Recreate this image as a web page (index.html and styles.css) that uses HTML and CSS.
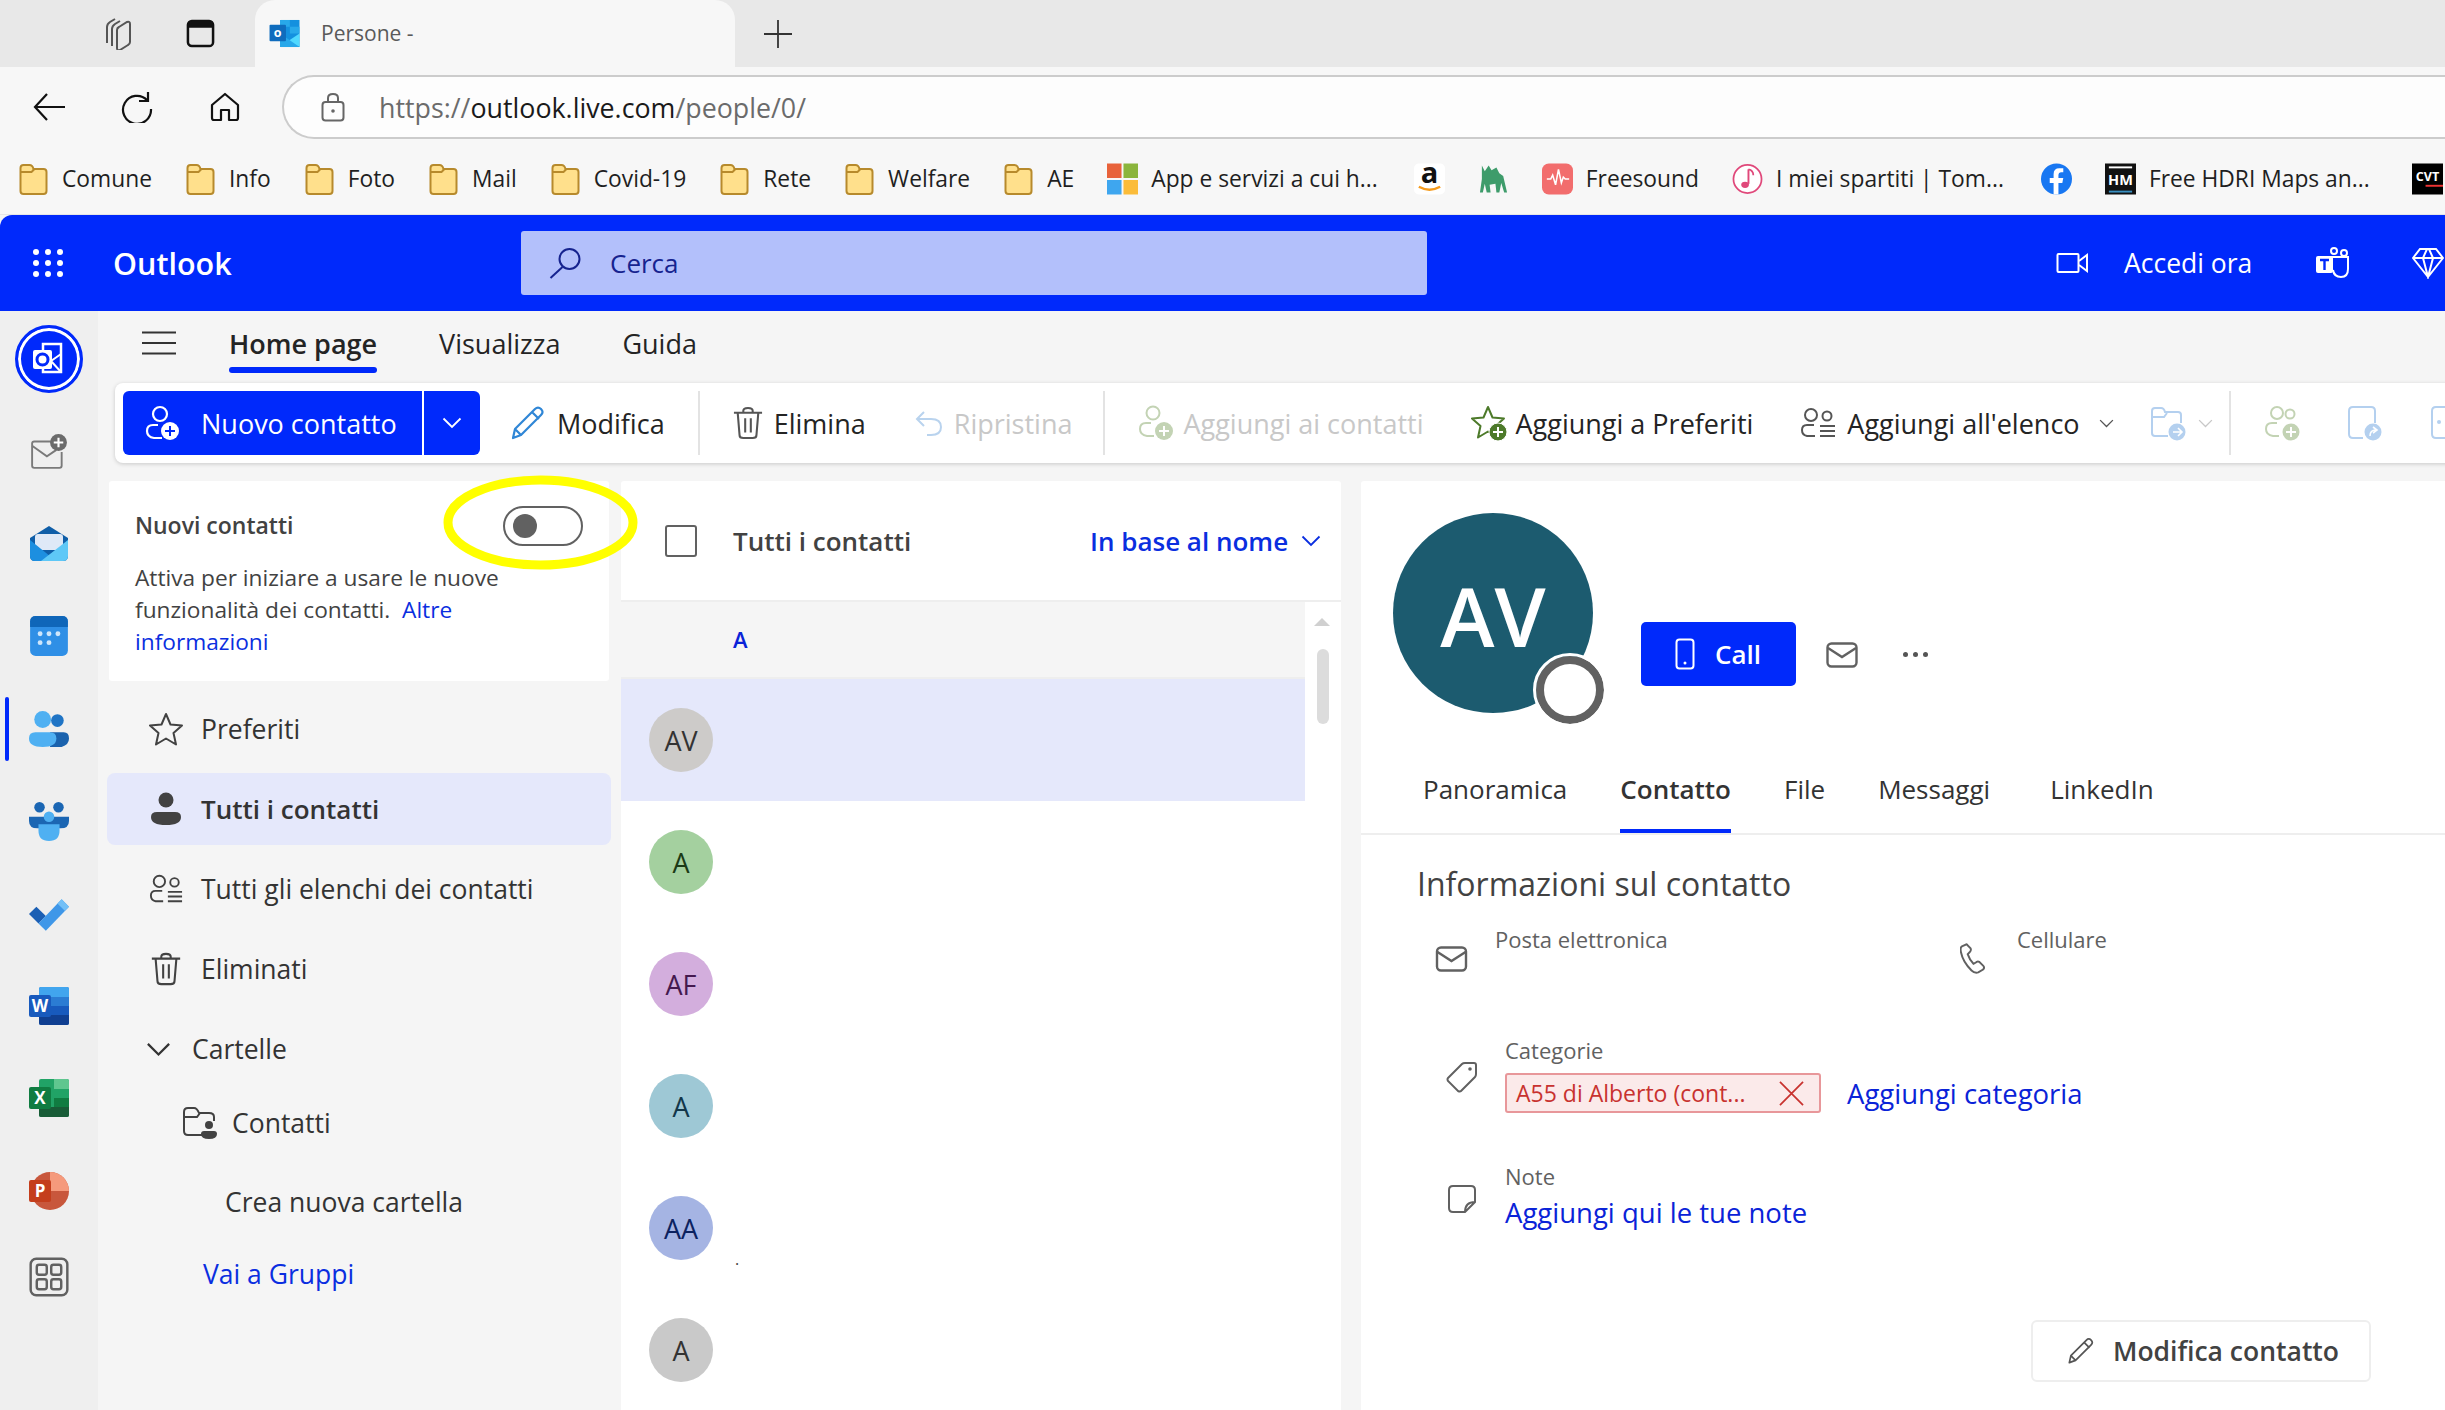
FILE: index.html
```html
<!DOCTYPE html>
<html lang="it">
<head>
    <meta charset="UTF-8">
    <title>Persone - Outlook</title>
    <link rel="stylesheet" href="styles.css">
</head>
<body>
    <svg class="sprite" width="0" height="0">
        <symbol id="folder" viewBox="0 0 30 32"><path d="M2 28V5q0-3 3-3h6q3 0 4 4h10q3 0 3 3v19q0 3-3 3H5q-3 0-3-3z" fill="#ffe08c" stroke="#b78a2c" stroke-width="2"/><path d="M2 9h11l3-3" fill="none" stroke="#b78a2c" stroke-width="2"/></symbol>
        <symbol id="mail" viewBox="0 0 32 26"><rect x="1.5" y="1.5" width="29" height="23" rx="4" fill="none" stroke="#616161" stroke-width="2.4"/><path d="M2 6l14 9 14-9" fill="none" stroke="#616161" stroke-width="2.4"/></symbol>
        <symbol id="chev" viewBox="0 0 20 12"><path d="M1.5 1.5L10 10l8.5-8.5" fill="none" stroke="currentColor" stroke-width="1.8"/></symbol>
        <symbol id="pen" viewBox="0 0 36 36"><path d="M3 33l2-9L25 4q3-3 6 0t0 6L11 30zM5 24l6 6M22 7l7 7" fill="none" stroke="currentColor" stroke-width="2.2" stroke-linejoin="round"/></symbol>
        <symbol id="trash" viewBox="0 0 32 36"><path d="M1 7h30M5 7l2 24q0 3 4 3h10q4 0 4-3l2-24M11 7V5q0-3 5-3t5 3v2M13 13v15M19 13v15" fill="none" stroke="currentColor" stroke-width="2.2"/></symbol>
        <symbol id="people-list" viewBox="0 0 36 30"><circle cx="11" cy="7" r="6" fill="none" stroke="currentColor" stroke-width="2"/><circle cx="27" cy="8" r="4.5" fill="none" stroke="currentColor" stroke-width="2"/><path d="M14 17H7q-5 0-5 5t5 6h8" fill="none" stroke="currentColor" stroke-width="2"/><path d="M20 18h15M20 23h15M20 28h15" stroke="currentColor" stroke-width="2"/></symbol>
    </svg>

    <!-- Barra del browser -->
    <div class="tabstrip">
        <svg class="tabs-ico" viewBox="0 0 32 32" fill="none" stroke="#555" stroke-width="2"><path d="M5 25V9q0-3 3-5l5-3M10 28V11q0-3 3-5l5-3"/><path d="M15 12q0-2 2-3l8-5q3-1 3 2v18q0 2-2 3l-8 5q-3 1-3-2z"/></svg>
        <svg class="tabs-ico2" viewBox="0 0 30 30"><rect x="2" y="2" width="26" height="26" rx="4" fill="none" stroke="#111" stroke-width="2.6"/><path d="M2 6q0-4 4-4h18q4 0 4 4v3H2z" fill="#111"/></svg>
        <div class="tab">
            <svg class="favicon" viewBox="0 0 32 30"><path d="M11 1h20v28H11z" fill="#1490df"/><path d="M11 1h10v7H11zM21 8h10v7H21z" fill="#28a8ea"/><path d="M31 15L19 23l12 6z" fill="#50d9ff"/><path d="M11 15l20 14H11z" fill="#28a8ea"/><rect y="6" width="17" height="17" rx="1" fill="#0f6cbd"/><text x="8.500" y="19" font-size="13" font-weight="700" fill="#fff" text-anchor="middle" font-family="Open Sans">o</text></svg>
            <span class="tab-title">Persone -</span>
        </div>
        <svg class="plus" viewBox="0 0 28 28"><path d="M14 0v28M0 14h28" stroke="#333" stroke-width="1.8"/></svg>
    </div>

    <div class="addressbar">
        <svg class="nav-back" viewBox="0 0 32 28"><path d="M32 14H2M14 1L2 14l12 13" fill="none" stroke="#111" stroke-width="2.2"/></svg>
        <svg class="nav-reload" viewBox="0 0 32 32"><path d="M26 9a14 14 0 1 0 4 9M27 1v9h-9" fill="none" stroke="#111" stroke-width="2.2"/></svg>
        <svg class="nav-home" viewBox="0 0 30 30"><path d="M2 13L15 2l13 11v13q0 2-2 2h-7V18h-8v10H4q-2 0-2-2z" fill="none" stroke="#111" stroke-width="2.2" stroke-linejoin="round"/></svg>
        <div class="urlbox">
            <svg class="lock" viewBox="0 0 24 30"><rect x="1.500" y="10" width="21" height="18.500" rx="3" fill="none" stroke="#666" stroke-width="2"/><path d="M7 10V6q0-4 5-4t5 4v4" fill="none" stroke="#666" stroke-width="2"/><circle cx="12" cy="19" r="1.800" fill="#666"/></svg>
            <span class="url">https://<b>outlook.live.com</b>/people/0/</span>
        </div>
    </div>

    <div class="bookmarks">
        <a class="bm"><svg class="bm-ico"><use href="#folder"/></svg>Comune</a>
        <a class="bm"><svg class="bm-ico"><use href="#folder"/></svg>Info</a>
        <a class="bm"><svg class="bm-ico"><use href="#folder"/></svg>Foto</a>
        <a class="bm"><svg class="bm-ico"><use href="#folder"/></svg>Mail</a>
        <a class="bm"><svg class="bm-ico"><use href="#folder"/></svg>Covid-19</a>
        <a class="bm"><svg class="bm-ico"><use href="#folder"/></svg>Rete</a>
        <a class="bm"><svg class="bm-ico"><use href="#folder"/></svg>Welfare</a>
        <a class="bm"><svg class="bm-ico"><use href="#folder"/></svg>AE</a>
        <a class="bm"><svg class="bm-ico" viewBox="0 0 32 32"><path d="M0 0h15v15H0z" fill="#e8623a"/><path d="M17 0h15v15H17z" fill="#8bb53c"/><path d="M0 17h15v15H0z" fill="#3ea6ef"/><path d="M17 17h15v15H17z" fill="#fbbc3a"/></svg>App e servizi a cui h...</a>
        <a class="bm bm-amazon"><svg class="bm-ico" viewBox="0 0 32 32"><rect width="32" height="32" rx="5" fill="#fff"/><text x="16" y="20" font-size="30" font-weight="700" text-anchor="middle" font-family="Open Sans" fill="#111">a</text><path d="M5 24q11 6 22 0" fill="none" stroke="#f59b1d" stroke-width="2.500"/></svg></a>
        <a class="bm"><svg class="bm-ico" viewBox="0 0 32 32"><path d="M4 2l3 6 4-6 3 5 5-3 3 6 4 3 4 17h-3l-3-10-2 10h-3l-1-9-6 1 1 8H9l-2-9-2 9H2L4 16z" fill="#3e9c6b"/></svg></a>
        <a class="bm"><svg class="bm-ico" viewBox="0 0 32 32"><rect width="32" height="32" rx="7" fill="#f26d6d"/><path d="M5 16h4l2-4 3 10 3-16 3 14 2-6 2 2h4" fill="none" stroke="#fff" stroke-width="1.600"/></svg>Freesound</a>
        <a class="bm"><svg class="bm-ico" viewBox="0 0 32 32"><circle cx="16" cy="16" r="14.500" fill="#fff" stroke="#e0487a" stroke-width="1.800"/><path d="M17 6v15" stroke="#e0487a" stroke-width="2"/><path d="M17 6q5 1 5 6" fill="none" stroke="#e0487a" stroke-width="1.800"/><ellipse cx="13.500" cy="22" rx="4" ry="3.200" fill="#e0487a"/></svg>I miei spartiti | Tom...</a>
        <a class="bm bm-fb"><svg class="bm-ico" viewBox="0 0 32 32"><circle cx="16" cy="16" r="16" fill="#1877f2"/><path d="M18 32V20h4l1-5h-5v-3q0-3 3-3h2V5h-4q-6 0-6 6v4H9v5h4v12z" fill="#fff"/></svg></a>
        <a class="bm"><svg class="bm-ico" viewBox="0 0 32 32"><rect width="32" height="32" fill="#111"/><path d="M4 4h24" stroke="#fff" stroke-width="2"/><text x="16" y="22" font-size="15" font-weight="700" fill="#fff" text-anchor="middle" font-family="Open Sans">HM</text><path d="M4 29h24" stroke="#3a8fc0" stroke-width="2"/></svg>Free HDRI Maps an...</a>
        <a class="bm bm-cvt"><svg class="bm-ico" viewBox="0 0 32 32"><rect width="32" height="32" fill="#000"/><text x="16" y="18" font-size="13" font-weight="700" fill="#fff" text-anchor="middle" font-family="Open Sans">CVT</text><path d="M14 23h18" stroke="#e33" stroke-width="2"/></svg></a>
    </div>

    <!-- Intestazione Outlook -->
    <header class="owa-head">
        <svg class="waffle" viewBox="0 0 32 30" fill="#fff"><circle cx="4" cy="4" r="3"/><circle cx="16" cy="4" r="3"/><circle cx="28" cy="4" r="3"/><circle cx="4" cy="15" r="3"/><circle cx="16" cy="15" r="3"/><circle cx="28" cy="15" r="3"/><circle cx="4" cy="26" r="3"/><circle cx="16" cy="26" r="3"/><circle cx="28" cy="26" r="3"/></svg>
        <span class="brand">Outlook</span>
        <div class="search">
            <svg class="search-ico" viewBox="0 0 32 32"><circle cx="20" cy="12" r="10" fill="none" stroke="#16238f" stroke-width="2"/><path d="M13 20L1 31" stroke="#16238f" stroke-width="2"/></svg>
            <span class="search-txt">Cerca</span>
        </div>
        <svg class="h-video" viewBox="0 0 32 26"><rect x="1.500" y="4" width="21" height="18" rx="1" fill="none" stroke="#fff" stroke-width="2"/><path d="M23 11l8-6v16l-8-6" fill="none" stroke="#fff" stroke-width="2"/></svg>
        <span class="h-join">Accedi ora</span>
        <svg class="h-teams" viewBox="0 0 34 32"><circle cx="18" cy="4" r="3" fill="none" stroke="#fff" stroke-width="2"/><circle cx="28" cy="6" r="3" fill="none" stroke="#fff" stroke-width="2"/><path d="M14 10h18v12q0 8-7 8t-8-7" fill="none" stroke="#fff" stroke-width="2"/><rect y="9" width="17" height="17" rx="2" fill="#fff"/><path d="M4 13h9M8.500 13v10" stroke="#0029fb" stroke-width="2.400"/></svg>
        <svg class="h-gem" viewBox="0 0 32 32"><path d="M8 2h16l7 9-15 19L1 11zM1 11h30M11 11l5 19 5-19-4-9h-2z" fill="none" stroke="#fff" stroke-width="2"/></svg>
    </header>

    <div class="app">
        <!-- Barra applicazioni -->
        <nav class="rail">
            <div class="rail-item">
                <div class="rail-current"><svg class="ico-40" viewBox="0 0 40 40"><path d="M14 5h18v28H14z" fill="none" stroke="#fff" stroke-width="2.500"/><path d="M22 22l10 11M22 22l10-7" stroke="#fff" stroke-width="2" fill="none"/><rect x="4" y="11" width="19" height="19" rx="2" fill="#fff"/><circle cx="13.500" cy="20.500" r="5.500" fill="none" stroke="#0029fb" stroke-width="3"/></svg></div>
            </div>
            <div class="rail-item">
                <svg class="ico-50" viewBox="0 0 36 36"><path d="M20 8H4q-2 0-2 2v21q0 2 2 2h24q2 0 2-2V18" fill="none" stroke="#7a7a7a" stroke-width="1.800"/><path d="M2 12l14 10 9-6" fill="none" stroke="#7a7a7a" stroke-width="1.800"/><circle cx="27" cy="9" r="8" fill="#6b6b6b"/><path d="M27 4.500v9M22.500 9h9" stroke="#fff" stroke-width="2"/></svg>
            </div>
            <div class="rail-item">
                <svg class="ico-40" viewBox="0 0 40 36"><path d="M1 12L20 0l19 12v18q0 5-5 5H6q-5 0-5-5z" fill="#0f5ea8"/><rect x="6" y="8" width="28" height="16" rx="3" fill="#dfe9f7"/><path d="M1 14l26 21H6q-5 0-5-5z" fill="#1d8fe0"/><path d="M39 14L12 35h22q5 0 5-5z" fill="#5ec8f7"/></svg>
            </div>
            <div class="rail-item">
                <svg class="ico-40" viewBox="0 0 34 36"><rect width="34" height="36" rx="5" fill="#2f8fe6"/><path d="M0 10V5q0-5 5-5h24q5 0 5 5v5z" fill="#0f66b9"/><g fill="#cfe6fb"><circle cx="9" cy="16" r="2.200"/><circle cx="17" cy="16" r="2.200"/><circle cx="25" cy="16" r="2.200"/><circle cx="9" cy="24" r="2.200"/><circle cx="17" cy="24" r="2.200"/></g></svg>
            </div>
            <div class="rail-item rail-active">
                <svg class="ico-40" viewBox="0 0 38 34"><circle cx="27" cy="9" r="6" fill="#1f74c5"/><path d="M20 20h13q5 0 5 6t-7 8H20z" fill="#1a62ad"/><circle cx="13" cy="8" r="8" fill="#4fb0f2"/><path d="M6 20h14q6 0 6 6 0 8-13 8T0 26q0-6 6-6z" fill="#4fb0f2"/></svg>
            </div>
            <div class="rail-item">
                <svg class="ico-40" viewBox="0 0 38 38"><circle cx="10" cy="6" r="5" fill="#1b66b3"/><circle cx="28" cy="6" r="5" fill="#1b66b3"/><path d="M0 15h38v4q0 7-8 7H8q-8 0-8-7z" fill="#1b66b3"/><circle cx="19" cy="15" r="5" fill="#4fb0f2"/><path d="M9 22h20v6q0 10-10 10T9 28z" fill="#4fb0f2"/></svg>
            </div>
            <div class="rail-item">
                <svg class="ico-40" viewBox="0 0 38 32"><path d="M0 16l7-7 9 9-7 7z" fill="#1b5fb4"/><path d="M9 25l7 7L38 9l-7-7z" fill="#3f97e8"/><path d="M31 2l7 7-4 4-7-7z" fill="#73c0f7"/></svg>
            </div>
            <div class="rail-item">
                <svg class="ico-40" viewBox="0 0 40 38"><rect x="10" width="30" height="38" rx="2" fill="#2b7cd3"/><path d="M10 2q0-2 2-2h26q2 0 2 2v8H10z" fill="#41a5ee"/><path d="M10 19h30v9H10z" fill="#185abd"/><path d="M10 28h30v8q0 2-2 2H12q-2 0-2-2z" fill="#103f91"/><rect y="8" width="22" height="22" rx="2" fill="#185abd"/><text x="11" y="25" font-size="17" font-weight="700" fill="#fff" text-anchor="middle" font-family="Open Sans">W</text></svg>
            </div>
            <div class="rail-item">
                <svg class="ico-40" viewBox="0 0 40 38"><rect x="10" width="30" height="38" rx="2" fill="#21a366"/><path d="M25 0h13q2 0 2 2v8H25z" fill="#5fc68f"/><path d="M25 19h15v9H25z" fill="#107c41"/><path d="M10 28h30v8q0 2-2 2H12q-2 0-2-2z" fill="#185c37"/><rect y="8" width="22" height="22" rx="2" fill="#107c41"/><text x="11" y="25" font-size="17" font-weight="700" fill="#fff" text-anchor="middle" font-family="Open Sans">X</text></svg>
            </div>
            <div class="rail-item">
                <svg class="ico-40" viewBox="0 0 40 38"><circle cx="21" cy="19" r="19" fill="#c8573c"/><path d="M21 0a19 19 0 0 1 19 19H21z" fill="#f59a7c"/><rect y="8" width="22" height="22" rx="2" fill="#c43e1c"/><text x="11" y="25" font-size="17" font-weight="700" fill="#fff" text-anchor="middle" font-family="Open Sans">P</text></svg>
            </div>
            <div class="rail-item rail-apps">
                <svg class="ico-40" viewBox="0 0 36 36" fill="none" stroke="#616161" stroke-width="2.200"><rect x="1.500" y="1.500" width="33" height="33" rx="5"/><rect x="7" y="7" width="9" height="9" rx="2"/><rect x="20" y="7" width="9" height="9" rx="2"/><rect x="7" y="20" width="9" height="9" rx="2"/><rect x="20" y="20" width="9" height="9" rx="2"/></svg>
            </div>
        </nav>

        <main class="main">
            <div class="menu">
                <svg class="burger" viewBox="0 0 34 24"><path d="M0 1.500h34M0 12h34M0 22.500h34" stroke="#333" stroke-width="2"/></svg>
                <span class="menu-tab menu-on">Home page</span>
                <span class="menu-tab">Visualizza</span>
                <span class="menu-tab">Guida</span>
            </div>

            <div class="ribbon">
                <div class="split">
                    <div class="split-main">
                        <svg class="rb-ico" viewBox="0 0 36 36"><circle cx="16" cy="9" r="7" fill="none" stroke="#fff" stroke-width="2.200"/><path d="M14 20H9q-6 0-6 6t7 7h8" fill="none" stroke="#fff" stroke-width="2.200"/><circle cx="26" cy="26" r="9" fill="#fff"/><path d="M26 21v10M21 26h10" stroke="#0029fb" stroke-width="2"/></svg>
                        Nuovo contatto
                    </div>
                    <div class="split-arrow"><svg class="chev-20"><use href="#chev"/></svg></div>
                </div>
                <div class="rb-item rb-first"><svg class="rb-ico rb-pen"><use href="#pen"/></svg>Modifica</div>
                <i class="rb-sep"></i>
                <div class="rb-item"><svg class="rb-ico rb-trash"><use href="#trash"/></svg>Elimina</div>
                <div class="rb-item rb-off rb-restore"><svg class="rb-ico rb-undo" viewBox="0 0 28 26"><path d="M9 2L2 9l7 7M2 9h14q10 0 10 8t-10 8h-4" fill="none" stroke="#b9d3ee" stroke-width="2"/></svg>Ripristina</div>
                <i class="rb-sep rb-sep-b"></i>
                <div class="rb-item rb-off rb-tight"><svg class="rb-ico" viewBox="0 0 36 36"><circle cx="15" cy="8" r="6.500" fill="none" stroke="#c3d3b4" stroke-width="2"/><path d="M13 18H8q-6 0-6 6t7 7h7" fill="none" stroke="#c3d3b4" stroke-width="2"/><circle cx="26" cy="26" r="9" fill="#c3d3b4"/><path d="M26 21v10M21 26h10" stroke="#fff" stroke-width="2"/></svg>Aggiungi ai contatti</div>
                <div class="rb-item rb-tight"><svg class="rb-ico" viewBox="0 0 36 36"><path d="M17 2l4.500 10.500 11.500 1-8.500 7.500 2.500 11.500-10-6-10 6 2.500-11.500L1 13.500l11.500-1z" fill="none" stroke="#4d7a2a" stroke-width="2" stroke-linejoin="round"/><circle cx="27" cy="27" r="9" fill="#4d7a2a" stroke="#fff" stroke-width="1"/><path d="M27 22v10M22 27h10" stroke="#fff" stroke-width="2"/></svg>Aggiungi a Preferiti</div>
                <div class="rb-item"><svg class="rb-ico rb-list"><use href="#people-list"/></svg>Aggiungi all'elenco<svg class="chev-16 chev-near"><use href="#chev"/></svg></div>
                <div class="rb-item rb-folder"><svg class="rb-ico" viewBox="0 0 36 36"><path d="M2 28V6q0-3 3-3h6q3 0 4 4h13q3 0 3 3v8M2 28q0 3 3 3h13M2 12h12l3-4" fill="none" stroke="#b4d0ef" stroke-width="2"/><circle cx="27" cy="27" r="8.500" fill="#b4d0ef"/><path d="M23 27h8M28 23l4 4-4 4" fill="none" stroke="#fff" stroke-width="1.600"/></svg><svg class="chev-16 rb-chev-off"><use href="#chev"/></svg></div>
                <i class="rb-sep rb-sep-near"></i>
                <div class="rb-item rb-icon-only"><svg class="rb-ico" viewBox="0 0 36 36"><circle cx="13" cy="8" r="6" fill="none" stroke="#c3d3b4" stroke-width="2"/><circle cx="26" cy="9" r="4.500" fill="none" stroke="#c3d3b4" stroke-width="2"/><path d="M13 18H8q-6 0-6 6t7 7h6" fill="none" stroke="#c3d3b4" stroke-width="2"/><circle cx="27" cy="27" r="8.500" fill="#c3d3b4"/><path d="M27 22v10M22 27h10" stroke="#fff" stroke-width="2"/></svg></div>
                <div class="rb-item rb-icon-only"><svg class="rb-ico" viewBox="0 0 36 36"><path d="M16 33H6q-4 0-4-4V6q0-4 4-4h18q4 0 4 4v12" fill="none" stroke="#b4d0ef" stroke-width="2"/><circle cx="26" cy="27" r="8.500" fill="#b4d0ef"/><path d="M23 31q0-6 6-6M26 22l4 3-4 3" fill="none" stroke="#fff" stroke-width="1.600"/></svg></div>
                <div class="rb-item rb-icon-only"><svg class="rb-ico" viewBox="0 0 36 36"><path d="M16 33H6q-4 0-4-4V6q0-4 4-4h18q4 0 4 4v12" fill="none" stroke="#b4d0ef" stroke-width="2"/><circle cx="9" cy="17" r="2" fill="#b4d0ef"/><circle cx="26" cy="27" r="8.500" fill="#b4d0ef"/></svg></div>
            </div>

            <div class="columns">
                <!-- Colonna sinistra -->
                <aside class="side">
                    <section class="promo">
                        <div class="promo-head">
                            <span class="promo-title">Nuovi contatti</span>
                            <span class="toggle"><i class="knob"></i></span>
                        </div>
                        <p class="promo-text">Attiva per iniziare a usare le nuove funzionalità dei contatti.&nbsp; <a class="lnk">Altre informazioni</a></p>
                        <svg class="circled" viewBox="0 0 195 95"><ellipse cx="97.500" cy="47.500" rx="92.500" ry="42.500" fill="none" stroke="#ffff00" stroke-width="9"/></svg>
                    </section>
                    <ul class="tree">
                        <li class="tree-row"><svg class="tree-ico" viewBox="0 0 34 34"><path d="M17 2l4.500 10.500L33 13.500l-8.500 7.500 2.500 11.500-10-6-10 6 2.500-11.500L1 13.500l11.500-1z" fill="none" stroke="#424242" stroke-width="2" stroke-linejoin="round"/></svg>Preferiti</li>
                        <li class="tree-row tree-on"><svg class="tree-ico" viewBox="0 0 34 34"><circle cx="17" cy="8" r="7.500" fill="#424242"/><path d="M8 20h18q6 0 6 5 0 8-15 8T2 25q0-5 6-5z" fill="#424242"/></svg>Tutti i contatti</li>
                        <li class="tree-row"><svg class="tree-ico"><use href="#people-list"/></svg>Tutti gli elenchi dei contatti</li>
                        <li class="tree-row"><svg class="tree-ico"><use href="#trash"/></svg>Eliminati</li>
                        <li class="tree-row tree-folders"><svg class="tree-chev"><use href="#chev"/></svg>Cartelle</li>
                        <li class="tree-row tree-contacts"><svg class="tree-ico" viewBox="0 0 34 32"><path d="M22 28H5q-4 0-4-4V5q0-4 4-4h6q3 0 5 5h10q5 0 5 4v4M1 10h13l3-4" fill="none" stroke="#424242" stroke-width="2"/><circle cx="26" cy="18" r="4" fill="#424242"/><path d="M21 24h10q3 0 3 3 0 5-8 5t-8-5q0-3 3-3z" fill="#424242"/></svg>Contatti</li>
                        <li class="tree-row tree-new">Crea nuova cartella</li>
                        <li class="tree-row tree-groups"><a class="lnk">Vai a Gruppi</a></li>
                    </ul>
                </aside>

                <!-- Elenco contatti -->
                <section class="list">
                    <div class="list-head">
                        <span class="check"></span>
                        <span class="list-title">Tutti i contatti</span>
                        <span class="sort">In base al nome</span>
                        <svg class="sort-chev"><use href="#chev"/></svg>
                    </div>
                    <div class="list-body">
                        <div class="rows">
                            <div class="letter">A</div>
                            <div class="row row-on"><span class="ava ava-grey">AV</span></div>
                            <div class="row"><span class="ava ava-green">A</span></div>
                            <div class="row"><span class="ava ava-purple">AF</span></div>
                            <div class="row"><span class="ava ava-teal">A</span></div>
                            <div class="row"><span class="ava ava-blue">AA</span><span class="row-dot">.</span></div>
                            <div class="row"><span class="ava ava-grey2">A</span></div>
                        </div>
                        <div class="scroll">
                            <i class="scroll-up"></i>
                            <i class="scroll-thumb"></i>
                        </div>
                    </div>
                </section>

                <!-- Dettaglio contatto -->
                <section class="detail">
                    <div class="hero">
                        <div class="big-ava">AV<i class="presence"></i></div>
                        <div class="call"><svg class="call-ico" viewBox="0 0 20 32"><rect x="1.500" y="1.500" width="17" height="29" rx="3" fill="none" stroke="#fff" stroke-width="2"/><circle cx="10" cy="25" r="1.500" fill="#fff"/></svg>Call</div>
                        <svg class="hero-mail"><use href="#mail"/></svg>
                        <span class="hero-more"><i></i><i></i><i></i></span>
                    </div>
                    <div class="dtabs">
                        <span class="dtab">Panoramica</span>
                        <span class="dtab dtab-on">Contatto</span>
                        <span class="dtab">File</span>
                        <span class="dtab dtab-wide">Messaggi</span>
                        <span class="dtab">LinkedIn</span>
                    </div>
                    <div class="info">
                        <h2 class="info-title">Informazioni sul contatto</h2>
                        <div class="info-pair">
                            <div class="pair-item"><svg class="pair-mail"><use href="#mail"/></svg><span class="lbl">Posta elettronica</span></div>
                            <div class="pair-item pair-phone"><svg class="pair-tel" viewBox="0 0 26 32"><path d="M6 2L2 4q-2 1-1 6 2 10 11 19 3 3 7 2l5-3q2-2 0-4l-4-4q-2-1-4 1l-2 1q-4-4-6-10l2-2q2-2 1-4L8 3Q7 1 6 2z" fill="none" stroke="#616161" stroke-width="2"/></svg><span class="lbl">Cellulare</span></div>
                        </div>
                        <div class="info-cat">
                            <svg class="cat-ico" viewBox="0 0 32 32"><path d="M19 2h9q2 0 2 2v9q0 2-1 3L15 30q-1 1-3 0L2 20q-1-2 0-3L16 3q1-1 3-1z" fill="none" stroke="#616161" stroke-width="2"/><circle cx="24" cy="8" r="1.800" fill="#616161"/></svg>
                            <div class="cat-body">
                                <span class="lbl lbl-block">Categorie</span>
                                <div class="cat-line">
                                    <span class="chip"><span class="chip-txt">A55 di Alberto (cont...</span><svg class="chip-x" viewBox="0 0 26 26"><path d="M1 1l24 24M25 1L1 25" stroke="#c8322f" stroke-width="1.800"/></svg></span>
                                    <a class="lnk-dark">Aggiungi categoria</a>
                                </div>
                            </div>
                        </div>
                        <div class="info-note">
                            <svg class="note-ico" viewBox="0 0 28 28"><path d="M27 17V5q0-4-4-4H5Q1 1 1 5v18q0 4 4 4h12zM17 27q0-10 10-10" fill="none" stroke="#616161" stroke-width="2"/></svg>
                            <div class="note-body">
                                <span class="lbl">Note</span>
                                <a class="lnk-dark note-link">Aggiungi qui le tue note</a>
                            </div>
                        </div>
                    </div>
                    <div class="edit-btn"><svg class="edit-ico"><use href="#pen"/></svg>Modifica contatto</div>
                </section>
            </div>
        </main>
    </div>
</body>
</html>
```

FILE: styles.css
```css
/* Pagina */
* {
    box-sizing: border-box;
}

html, body {
    margin: 0;
    padding: 0;
}

body {
    width: 2445px;
    height: 1410px;
    overflow: hidden;
    font-family: "Open Sans", "Noto Sans", sans-serif;
    color: #242424;
    background-color: #f5f5f5;
}

.sprite {
    display: block;
    position: absolute;
}

svg {
    display: block;
    flex: none;
}

/* Schede del browser */
.tabstrip {
    display: flex;
    align-items: center;
    height: 67px;
    padding-left: 102px;
    background-color: #e8e8e8;
}

.tabs-ico {
    width: 32px;
    height: 32px;
}

.tabs-ico2 {
    width: 29px;
    height: 29px;
    margin-left: 52px;
}

.tab {
    display: flex;
    align-items: center;
    width: 480px;
    height: 67px;
    margin-left: 40px;
    padding-left: 14px;
    background-color: #f7f7f7;
    border-radius: 20px 20px 0 0;
}

.favicon {
    width: 32px;
    height: 29px;
}

.tab-title {
    margin: -2px 0 0 20px;
    font-size: 21px;
    color: #5a5a5a;
}

.plus {
    width: 28px;
    height: 28px;
    margin-left: 29px;
}

/* Barra indirizzo */
.addressbar {
    display: flex;
    align-items: center;
    height: 80px;
    padding-left: 33px;
    background-color: #f7f7f7;
}

.nav-back {
    width: 32px;
    height: 28px;
}

.nav-reload {
    width: 32px;
    height: 32px;
    margin-left: 56px;
}

.nav-home {
    width: 30px;
    height: 30px;
    margin-left: 57px;
}

.urlbox {
    display: flex;
    align-items: center;
    width: 2180px;
    height: 64px;
    margin-left: 42px;
    padding-left: 37px;
    background-color: #fdfdfd;
    border: 2px solid #cccccc;
    border-right: none;
    border-radius: 32px 0 0 32px;
}

.lock {
    width: 24px;
    height: 30px;
}

.url {
    margin-left: 34px;
    font-size: 26.8px;
    color: #6b6b6b;
}

.url b {
    font-weight: 400;
    color: #1a1a1a;
}

/* Preferiti del browser */
.bookmarks {
    display: flex;
    align-items: center;
    gap: 33px;
    height: 68px;
    padding-left: 18px;
    padding-bottom: 4px;
    background-color: #f7f7f7;
    border-bottom: 1px solid #e6e6e6;
    font-size: 22.8px;
    white-space: nowrap;
}

.bm {
    display: flex;
    align-items: center;
    gap: 13px;
    color: #1f1f1f;
}

.bm-amazon {
    margin-left: 3px;
}

.bm-fb {
    margin-left: 4px;
}

.bm-cvt {
    margin-left: 9px;
}

.bm-ico {
    width: 31px;
    height: 32px;
}

/* Intestazione */
.owa-head {
    display: flex;
    align-items: center;
    height: 96px;
    padding-left: 32px;
    background-color: #0029fb;
    border-radius: 12px 0 0 0;
    color: #ffffff;
    overflow: hidden;
}

.waffle {
    width: 32px;
    height: 30px;
}

.brand {
    width: 408px;
    margin-left: 49px;
    font-size: 30.5px;
    font-weight: 600;
}

.search {
    display: flex;
    align-items: center;
    width: 906px;
    height: 64px;
    padding-left: 28px;
    background-color: #b3c0fb;
    border-radius: 3px;
}

.search-ico {
    width: 33px;
    height: 32px;
}

.search-txt {
    margin-left: 28px;
    font-size: 26px;
    color: #16238f;
}

.h-video {
    width: 32px;
    height: 26px;
    margin-left: 629px;
}

.h-join {
    margin-left: 36px;
    font-size: 26.5px;
}

.h-teams {
    width: 34px;
    height: 32px;
    margin-left: 64px;
}

.h-gem {
    width: 32px;
    height: 32px;
    margin-left: 62px;
}

/* Corpo */
.app {
    display: flex;
    height: 1099px;
}

.rail {
    width: 98px;
    height: 1099px;
    padding-top: 2px;
    background-color: #efefef;
    flex: none;
}

.rail-item {
    display: flex;
    align-items: center;
    justify-content: center;
    position: relative;
    height: 92.4px;
}

.rail-current {
    display: flex;
    align-items: center;
    justify-content: center;
    width: 68px;
    height: 68px;
    background-color: #0029fb;
    border: 3px solid #0029fb;
    border-radius: 50%;
    box-shadow: inset 0 0 0 3px #ffffff;
}

.rail-active::before {
    content: "";
    position: absolute;
    left: 5px;
    top: 14px;
    width: 4px;
    height: 64px;
    background-color: #0029fb;
    border-radius: 2px;
}

.rail-apps {
    margin-top: -6px;
}

.ico-40 {
    width: 40px;
    height: 40px;
}

.ico-50 {
    width: 38px;
    height: 38px;
}

.main {
    flex: 1;
    min-width: 0;
    background-color: #f5f5f5;
}

/* Menu */
.menu {
    display: flex;
    align-items: center;
    height: 72px;
    padding-left: 44px;
    padding-bottom: 8px;
    font-size: 27px;
}

.burger {
    width: 34px;
    height: 24px;
    margin-right: 53px;
}

.menu-tab {
    position: relative;
    margin-right: 62px;
}

.menu-on {
    font-weight: 600;
}

.menu-on::after {
    content: "";
    position: absolute;
    left: 0;
    right: 0;
    bottom: -11px;
    height: 6px;
    background-color: #0029fb;
    border-radius: 3px;
}

/* Ruban */
.ribbon {
    display: flex;
    align-items: center;
    width: 2400px;
    height: 80px;
    margin-left: 17px;
    padding-left: 8px;
    background-color: #ffffff;
    border-radius: 8px;
    box-shadow: 0 1px 4px rgba(0, 0, 0, 0.18);
    font-size: 27px;
    white-space: nowrap;
}

.split {
    display: flex;
    height: 64px;
    color: #ffffff;
    flex: none;
}

.split-main {
    display: flex;
    align-items: center;
    gap: 21px;
    width: 299px;
    padding-left: 21px;
    background-color: #0029fb;
    border-radius: 6px 0 0 6px;
}

.split-arrow {
    display: flex;
    align-items: center;
    justify-content: center;
    width: 56px;
    margin-left: 2px;
    background-color: #0029fb;
    border-radius: 0 6px 6px 0;
}

.chev-20 {
    width: 20px;
    height: 12px;
}

.chev-16 {
    width: 15px;
    height: 9px;
    margin-left: 12px;
    color: #555555;
}

.chev-near {
    margin-left: 8px;
}

.rb-chev-off {
    color: #c8c8c8;
}

.rb-ico {
    width: 36px;
    height: 36px;
}

.rb-item {
    display: flex;
    align-items: center;
    gap: 11px;
    margin-left: 47px;
}

.rb-first {
    margin-left: 30px;
}

.rb-sep {
    width: 2px;
    height: 64px;
    margin-left: 33px;
    background-color: #e3e3e3;
    flex: none;
}

.rb-sep + .rb-item {
    margin-left: 33px;
}

.rb-sep-b {
    margin-left: 31px;
}

.rb-sep-near {
    margin-left: 16px;
}

.rb-restore {
    margin-left: 49px;
}

.rb-tight {
    gap: 9px;
}

.rb-pen {
    color: #2f86d6;
}

.rb-trash {
    width: 30px;
    color: #555555;
}

.rb-undo {
    width: 28px;
}

.rb-list {
    color: #555555;
}

.rb-off {
    color: #c8c8c8;
}

.rb-folder {
    gap: 0;
    margin-left: 36px;
}

.rb-icon-only {
    margin-left: 47px;
}

/* Colonne */
.columns {
    display: flex;
    margin-top: 18px;
}

.side {
    width: 523px;
    flex: none;
}

.promo {
    position: relative;
    width: 500px;
    height: 200px;
    margin-left: 11px;
    padding: 27px 26px 0;
    background-color: #ffffff;
    border-radius: 3px;
}

.promo-head {
    display: flex;
    align-items: center;
    justify-content: space-between;
    height: 36px;
}

.promo-title {
    margin-top: -2px;
    font-size: 23px;
    font-weight: 600;
    color: #424242;
}

.toggle {
    display: flex;
    align-items: center;
    width: 80px;
    height: 40px;
    padding-left: 8px;
    border: 2.500px solid #616161;
    border-radius: 20px;
}

.knob {
    display: block;
    width: 24px;
    height: 24px;
    background-color: #616161;
    border-radius: 50%;
}

.promo-text {
    margin: 18px 0 0;
    font-size: 22.7px;
    line-height: 32px;
    color: #424242;
}

.circled {
    position: absolute;
    left: 334px;
    top: -6px;
    width: 195px;
    height: 95px;
}

.lnk {
    color: #0a2ee0;
}

.lnk-dark {
    color: #0a23d8;
}

/* Albero */
.tree {
    margin: 0;
    padding: 12px 0 0 9px;
    list-style: none;
    font-size: 26.5px;
    color: #333333;
}

.tree-row {
    display: flex;
    align-items: center;
    gap: 18px;
    width: 504px;
    height: 72px;
    margin-bottom: 8px;
    padding-left: 42px;
}

.tree-on {
    font-size: 26px;
    font-weight: 600;
    background-color: #e5e8fb;
    border-radius: 8px;
}

.tree-ico {
    width: 34px;
    height: 34px;
    color: #424242;
}

.tree-folders {
    gap: 21px;
    padding-left: 39px;
    margin-bottom: 6px;
}

.tree-chev {
    width: 25px;
    height: 15px;
    color: #333333;
}

.tree-contacts {
    gap: 15px;
    height: 64px;
    margin-bottom: 11px;
    padding-left: 76px;
}

.tree-new {
    margin-bottom: 4px;
    padding-left: 118px;
}

.tree-groups {
    height: 64px;
    padding-left: 96px;
}

/* Elenco */
.list {
    width: 720px;
    height: 929px;
    background-color: #ffffff;
    border-radius: 3px 3px 0 0;
    flex: none;
}

.list-head {
    display: flex;
    align-items: center;
    height: 121px;
    padding-left: 44px;
    border-bottom: 2px solid #eeeeee;
}

.check {
    width: 32px;
    height: 32px;
    border: 2px solid #616161;
    border-radius: 3px;
}

.list-title {
    width: 357px;
    margin-left: 36px;
    font-size: 26px;
    font-weight: 600;
    color: #424242;
}

.sort {
    font-size: 26px;
    font-weight: 600;
    color: #0a2ee0;
}

.sort-chev {
    width: 20px;
    height: 12px;
    margin-left: 13px;
    color: #0a2ee0;
}

.list-body {
    display: flex;
}

.rows {
    width: 684px;
}

.letter {
    height: 77px;
    padding: 22px 0 0 112px;
    background-color: #f5f5f5;
    border-bottom: 2px solid #eeeeee;
    font-size: 22px;
    font-weight: 600;
    color: #0a23d8;
}

.row {
    display: flex;
    align-items: center;
    height: 122px;
    padding-left: 28px;
}

.row-on {
    background-color: #e5e8fb;
}

.row-dot {
    align-self: flex-end;
    margin: 0 0 22px 22px;
    font-size: 16px;
    line-height: 16px;
    color: #424242;
}

.ava {
    display: flex;
    align-items: center;
    justify-content: center;
    width: 64px;
    height: 64px;
    border-radius: 50%;
    font-size: 27px;
}

.ava-grey {
    background-color: #cdcbc9;
    color: #333333;
}

.ava-green {
    background-color: #a4d09f;
    color: #1c3a16;
}

.ava-purple {
    background-color: #d3aedd;
    color: #45194f;
}

.ava-teal {
    background-color: #9ec8d5;
    color: #12374a;
}

.ava-blue {
    background-color: #a5b4e3;
    color: #0c2260;
}

.ava-grey2 {
    background-color: #c9c9c9;
    color: #333333;
}

.scroll {
    width: 36px;
    padding-top: 16px;
}

.scroll-up {
    display: block;
    width: 0;
    height: 0;
    margin-left: 9px;
    border-left: 8px solid transparent;
    border-right: 8px solid transparent;
    border-bottom: 8px solid #d0d0d0;
}

.scroll-thumb {
    display: block;
    width: 12px;
    height: 75px;
    margin: 23px 0 0 12px;
    background-color: #dcdcdc;
    border-radius: 6px;
}

/* Dettaglio */
.detail {
    position: relative;
    width: 1084px;
    height: 929px;
    margin-left: 20px;
    background-color: #ffffff;
    border-radius: 3px 0 0 0;
    flex: none;
}

.hero {
    display: flex;
    align-items: flex-start;
    height: 280px;
    padding: 32px 0 0 32px;
}

.big-ava {
    position: relative;
    display: flex;
    align-items: center;
    justify-content: center;
    width: 200px;
    height: 200px;
    padding-top: 3px;
    background-color: #1c5b6f;
    border-radius: 50%;
    font-size: 82px;
    font-weight: 600;
    color: #ffffff;
}

.presence {
    position: absolute;
    left: 143px;
    top: 143px;
    width: 68px;
    height: 68px;
    background-color: #ffffff;
    border: 8px solid #616161;
    border-radius: 50%;
    outline: 3px solid #ffffff;
}

.call {
    display: flex;
    align-items: center;
    gap: 20px;
    width: 155px;
    height: 64px;
    margin: 109px 0 0 48px;
    padding-left: 34px;
    background-color: #0029fb;
    border-radius: 5px;
    font-size: 26px;
    font-weight: 600;
    color: #ffffff;
}

.call-ico {
    width: 20px;
    height: 32px;
}

.hero-mail {
    width: 32px;
    height: 26px;
    margin: 129px 0 0 30px;
}

.hero-more {
    display: flex;
    gap: 5px;
    margin: 139px 0 0 45px;
}

.hero-more i {
    display: block;
    width: 5px;
    height: 5px;
    background-color: #555555;
    border-radius: 50%;
}

.dtabs {
    display: flex;
    height: 72px;
    padding-left: 62px;
    font-size: 26px;
    gap: 53px;
    color: #333333;
}

.dtab {
    position: relative;
    padding-top: 10px;
}

.dtab-wide {
    padding-right: 7px;
}

.dtab-on {
    font-weight: 600;
}

.dtab-on::after {
    content: "";
    position: absolute;
    left: 0;
    right: 0;
    bottom: 0;
    height: 4px;
    background-color: #0029fb;
}

.info {
    padding: 29px 0 0 56px;
    border-top: 2px solid #eeeeee;
}

.info-title {
    margin: 0;
    font-size: 32px;
    font-weight: 400;
    line-height: 40px;
    color: #424242;
}

.lbl {
    font-size: 22px;
    line-height: 30px;
    color: #616161;
}

.lbl-block {
    display: block;
}

.info-pair {
    display: flex;
    height: 131px;
    padding: 20px 0 0 18px;
}

.pair-item {
    display: flex;
    align-items: flex-start;
    gap: 27px;
    width: 525px;
    flex: none;
}

.pair-mail {
    width: 33px;
    height: 26px;
    margin-top: 22px;
}

.pair-phone {
    gap: 32px;
}

.pair-tel {
    width: 25px;
    height: 32px;
    margin-top: 18px;
}

.info-cat {
    display: flex;
    padding-left: 29px;
    height: 126px;
}

.cat-ico {
    width: 32px;
    height: 32px;
    margin-top: 26px;
}

.cat-body {
    margin-left: 27px;
}

.cat-line {
    display: flex;
    align-items: center;
    gap: 26px;
    margin-top: 8px;
    font-size: 27.5px;
}

.chip {
    display: flex;
    align-items: center;
    width: 316px;
    height: 40px;
    padding-left: 9px;
    background-color: #fbeaea;
    border: 2px solid #e8979a;
    border-radius: 3px;
    font-size: 23px;
    color: #c8322f;
}

.chip-txt {
    width: 263px;
}

.chip-x {
    width: 25px;
    height: 25px;
}

.info-note {
    display: flex;
    padding-left: 31px;
}

.note-ico {
    width: 28px;
    height: 28px;
    margin-top: 24px;
}

.note-body {
    display: flex;
    flex-direction: column;
    margin-left: 29px;
    font-size: 27.5px;
    line-height: 36px;
}

.note-link {
    margin-top: 4px;
}

.edit-btn {
    position: absolute;
    left: 670px;
    top: 839px;
    display: flex;
    align-items: center;
    gap: 18px;
    width: 340px;
    height: 62px;
    padding-left: 34px;
    border: 2px solid #eeeeee;
    border-radius: 6px;
    font-size: 26.5px;
    font-weight: 600;
    color: #424242;
}

.edit-ico {
    width: 28px;
    height: 28px;
    color: #555555;
}
```
